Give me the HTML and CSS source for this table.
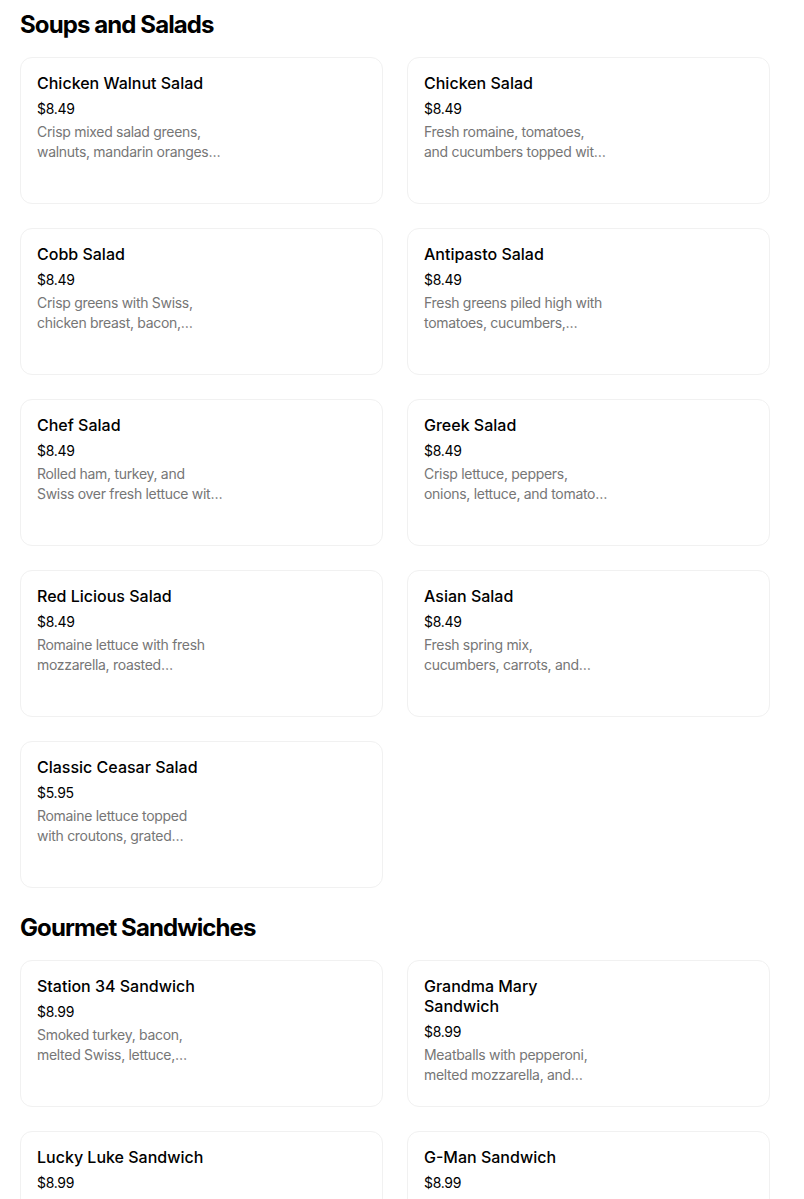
FILE: index.html
```html
<!DOCTYPE html>
<html>
<head>
<meta charset="utf-8">
<link rel="stylesheet" href="styles.css">
</head>
<body>
<main class="menu">
  <section class="section">
    <h2 class="section-title">Soups and Salads</h2>
    <div class="grid">
      <div class="card"><div class="info"><div class="name">Chicken Walnut Salad</div><div class="price">$8.49</div><div class="desc">Crisp mixed salad greens,<br>walnuts, mandarin oranges…</div></div></div>
      <div class="card"><div class="info"><div class="name">Chicken Salad</div><div class="price">$8.49</div><div class="desc">Fresh romaine, tomatoes,<br>and cucumbers topped wit…</div></div></div>
      <div class="card"><div class="info"><div class="name">Cobb Salad</div><div class="price">$8.49</div><div class="desc">Crisp greens with Swiss,<br>chicken breast, bacon,…</div></div></div>
      <div class="card"><div class="info"><div class="name">Antipasto Salad</div><div class="price">$8.49</div><div class="desc">Fresh greens piled high with<br>tomatoes, cucumbers,…</div></div></div>
      <div class="card"><div class="info"><div class="name">Chef Salad</div><div class="price">$8.49</div><div class="desc">Rolled ham, turkey, and<br>Swiss over fresh lettuce wit…</div></div></div>
      <div class="card"><div class="info"><div class="name">Greek Salad</div><div class="price">$8.49</div><div class="desc">Crisp lettuce, peppers,<br>onions, lettuce, and tomato…</div></div></div>
      <div class="card"><div class="info"><div class="name">Red Licious Salad</div><div class="price">$8.49</div><div class="desc">Romaine lettuce with fresh<br>mozzarella, roasted…</div></div></div>
      <div class="card"><div class="info"><div class="name">Asian Salad</div><div class="price">$8.49</div><div class="desc">Fresh spring mix,<br>cucumbers, carrots, and…</div></div></div>
      <div class="card"><div class="info"><div class="name">Classic Ceasar Salad</div><div class="price">$5.95</div><div class="desc">Romaine lettuce topped<br>with croutons, grated…</div></div></div>
    </div>
  </section>
  <section class="section">
    <h2 class="section-title">Gourmet Sandwiches</h2>
    <div class="grid">
      <div class="card"><div class="info"><div class="name">Station 34 Sandwich</div><div class="price">$8.99</div><div class="desc">Smoked turkey, bacon,<br>melted Swiss, lettuce,…</div></div></div>
      <div class="card"><div class="info"><div class="name">Grandma Mary<br>Sandwich</div><div class="price">$8.99</div><div class="desc">Meatballs with pepperoni,<br>melted mozzarella, and…</div></div></div>
      <div class="card"><div class="info"><div class="name">Lucky Luke Sandwich</div><div class="price">$8.99</div><div class="desc">Grilled chicken, bacon,<br>and ranch with melted…</div></div></div>
      <div class="card"><div class="info"><div class="name">G-Man Sandwich</div><div class="price">$8.99</div><div class="desc">Ham, salami, pepperoni,<br>and provolone with…</div></div></div>
    </div>
  </section>
</main>
</body>
</html>
```

FILE: styles.css
```css
html, body {
  margin: 0;
  padding: 0;
  background: #ffffff;
}
body {
  font-family: Inter, "Noto Sans", "Liberation Sans", sans-serif;
  color: #000;
}
.menu {
  width: 750px;
  padding: 9px 20px 40px;
}
.section + .section {
  margin-top: 24px;
}
.section-title {
  margin: 0 0 16px;
  font-size: 24px;
  line-height: 32px;
  font-weight: 700;
  letter-spacing: -0.9px;
}
.grid {
  display: grid;
  grid-template-columns: 1fr 1fr;
  gap: 24px;
}
.card {
  box-sizing: border-box;
  height: 147px;
  border: 1px solid #f1f1f1;
  border-radius: 12px;
  padding: 15px 16px 16px;
  display: flex;
}
.info {
  width: 200px;
}
.name {
  font-size: 16px;
  line-height: 20px;
  font-weight: 500;
}
.price {
  margin-top: 6px;
  font-size: 14px;
  line-height: 20px;
  letter-spacing: -0.3px;
}
.desc {
  margin-top: 3px;
  font-size: 14px;
  line-height: 20px;
  color: #767676;
  letter-spacing: -0.3px;
  white-space: nowrap;
}
```
